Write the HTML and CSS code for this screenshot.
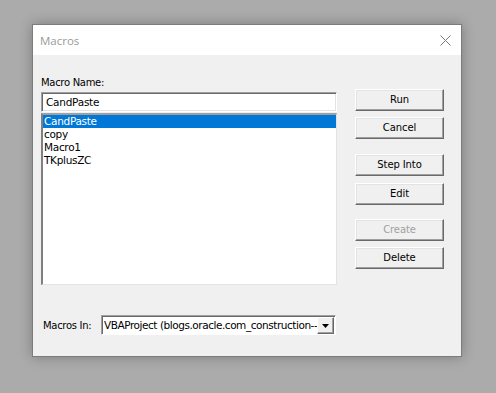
FILE: index.html
```html
<!DOCTYPE html>
<html>
<head>
<meta charset="utf-8">
<link rel="stylesheet" href="styles.css">
</head>
<body>
<div class="dialog">
  <div class="titlebar">
    <span class="title">Macros</span>
    <svg class="close" width="11" height="11" viewBox="0 0 11 11"><path d="M0.5 0.5 L10.5 10.5 M10.5 0.5 L0.5 10.5" stroke="#7a7a7a" stroke-width="1" fill="none"/></svg>
  </div>
  <div class="client">
    <div class="main">
      <div class="left">
        <div class="label">Macro Name:</div>
        <div class="textbox">CandPaste</div>
        <div class="listbox">
          <div class="item selected">CandPaste</div>
          <div class="item">copy</div>
          <div class="item">Macro1</div>
          <div class="item">TKplusZC</div>
        </div>
      </div>
      <div class="buttons">
        <div class="btn">Run</div>
        <div class="btn gap-s">Cancel</div>
        <div class="btn gap-l">Step Into</div>
        <div class="btn gap-s2">Edit</div>
        <div class="btn gap-l2 disabled">Create</div>
        <div class="btn gap-s">Delete</div>
      </div>
    </div>
    <div class="bottom">
      <span class="label in-label">Macros In:</span>
      <div class="combo">
        <span class="combo-text">VBAProject (blogs.oracle.com_construction--</span>
        <div class="drop"><svg width="7" height="4" viewBox="0 0 7 4"><path d="M0 0 H7 L3.5 4 Z" fill="#000"/></svg></div>
      </div>
    </div>
  </div>
</div>
</body>
</html>
```

FILE: styles.css
```css
html, body {
  margin: 0;
  padding: 0;
}
body {
  background: #ababab;
  width: 496px;
  height: 393px;
  overflow: hidden;
  font-family: "DejaVu Sans", Tahoma, sans-serif;
  font-size: 10px;
  color: #000;
}
.dialog {
  margin: 24px 0 0 32px;
  width: 428px;
  height: 331px;
  border: 1px solid #7c7c7c;
  background: #f0f0f0;
  box-shadow: 0 0 12px rgba(0,0,0,0.28);
  display: flex;
  flex-direction: column;
}
.titlebar {
  height: 30px;
  background: #fff;
  display: flex;
  align-items: center;
  justify-content: space-between;
  padding: 0 10px 0 7px;
}
.title {
  font-family: "Open Sans", "Noto Sans", sans-serif;
  font-size: 11.5px;
  color: #9a9a9a;
  margin-top: 1px;
}
.close {
  display: block;
}
.client {
  padding: 21px 0 0 8px;
  flex: 1;
}
.main {
  display: flex;
  gap: 18px;
}
.left {
  width: 296px;
  display: flex;
  flex-direction: column;
}
.label {
  line-height: 13px;
  height: 13px;
  letter-spacing: -0.3px;
  white-space: nowrap;
}
.textbox {
  margin-top: 3px;
  height: 18px;
  box-sizing: content-box;
  background: #fff;
  border: 1px solid;
  border-color: #a0a0a0 #fff #fff #a0a0a0;
  box-shadow: inset 1px 1px #696969, inset -1px -1px #e3e3e3;
  padding: 0 0 0 4px;
  line-height: 18px;
  font-size: 10.5px;
  letter-spacing: -0.25px;
  width: 290px;
}
.listbox {
  margin-top: 1px;
  height: 169px;
  width: 293px;
  background: #fff;
  border-style: solid;
  border-width: 2px 1px 1px 2px;
  border-color: #a0a0a0 #e3e3e3 #e3e3e3 #808080;
  padding: 0;
}
.item {
  height: 13px;
  line-height: 13px;
  padding-left: 1px;
  font-size: 10.5px;
  letter-spacing: -0.3px;
}
.item.selected {
  background: #0078d7;
  color: #fff;
}
.buttons {
  padding-top: 13px;
  width: 89px;
  display: flex;
  flex-direction: column;
}
.btn {
  box-sizing: border-box;
  height: 22px;
  width: 89px;
  border: 1px solid;
  border-color: #fff #696969 #696969 #fff;
  box-shadow: inset -1px -1px #a0a0a0, inset 1px 1px #e3e3e3;
  background: #f0f0f0;
  text-align: center;
  line-height: 20px;
  letter-spacing: -0.1px;
}
.gap-s { margin-top: 6px; }
.gap-l { margin-top: 15px; }
.gap-s2 { margin-top: 7px; }
.gap-l2 { margin-top: 14px; }
.btn.disabled { color: #a0a0a0; }
.bottom {
  margin-top: 30px;
  display: flex;
  align-items: center;
  height: 20px;
}
.in-label {
  margin-left: 2px;
  width: 58px;
}
.combo {
  width: 233px;
  height: 18px;
  box-sizing: content-box;
  background: #fff;
  border: 1px solid;
  border-color: #a0a0a0 #fff #fff #a0a0a0;
  box-shadow: inset 1px 1px #696969;
  display: flex;
  align-items: center;
  overflow: hidden;
}
.combo-text {
  flex: 1;
  white-space: nowrap;
  padding-left: 2px;
  letter-spacing: -0.45px;
  font-size: 10.5px;
}
.drop {
  width: 17px;
  height: 17px;
  box-sizing: border-box;
  margin: 1px 1px 0 0;
  border: 1px solid;
  border-color: #fff #696969 #696969 #fff;
  box-shadow: inset -1px -1px #a0a0a0;
  background: #f0f0f0;
  display: flex;
  align-items: center;
  justify-content: center;
  flex: none;
}
.drop svg { display: block; }
```
